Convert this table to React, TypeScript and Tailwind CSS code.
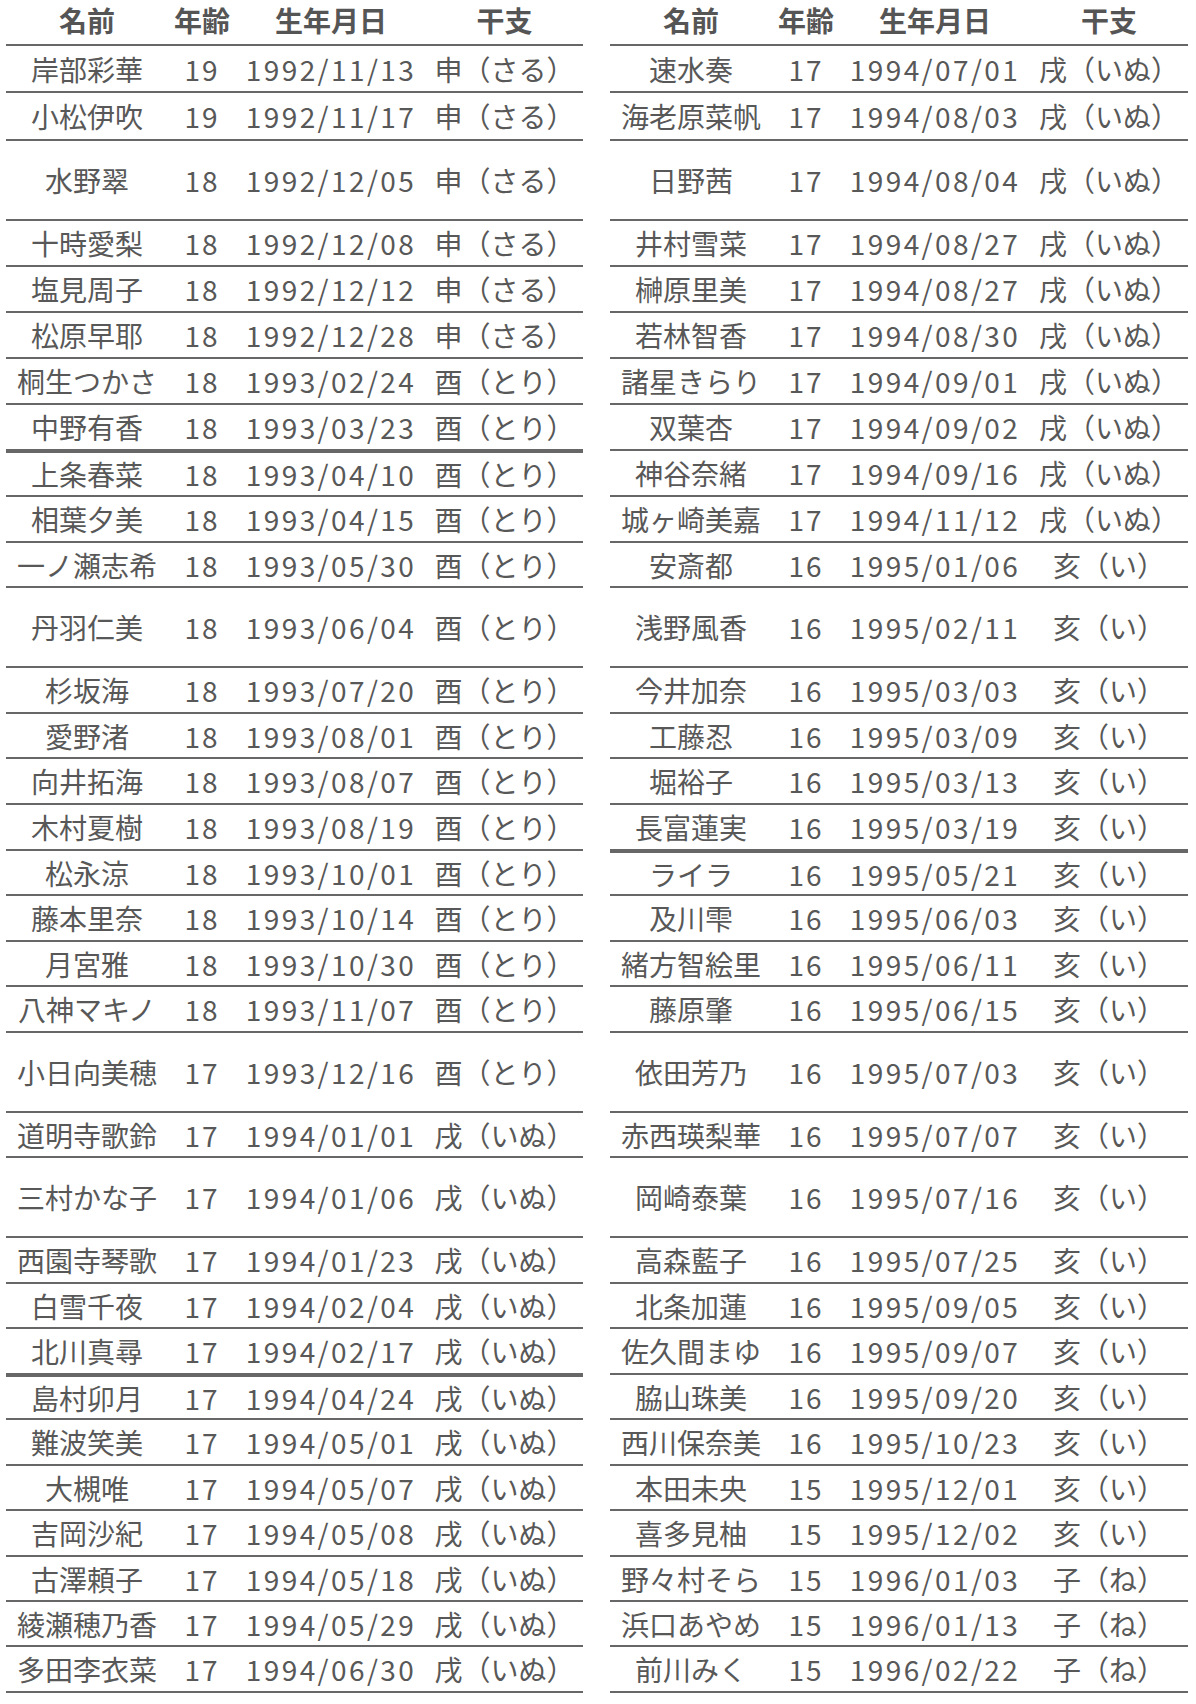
import React from 'react';

type Row = { name: string; age: string; date: string; eto: string };

// shared row heights (px, border included); both halves use the same rows
const heights = [
  'h-[47px]', 'h-[48px]', 'h-[80px]', 'h-[46px]', 'h-[46px]', 'h-[46px]', 'h-[46px]', 'h-[46px]',
  'h-[46px]', 'h-[46px]', 'h-[45px]', 'h-[80px]', 'h-[46px]', 'h-[45px]', 'h-[46px]', 'h-[46px]',
  'h-[45px]', 'h-[46px]', 'h-[45px]', 'h-[46px]', 'h-[80px]', 'h-[45px]', 'h-[80px]', 'h-[46px]',
  'h-[45px]', 'h-[46px]', 'h-[45px]', 'h-[46px]', 'h-[45px]', 'h-[46px]', 'h-[45px]', 'h-[45px]',
  'h-[46px]',
];

const leftRows: Row[] = [
  { name: '岸部彩華', age: '19', date: '1992/11/13', eto: '申（さる）' },
  { name: '小松伊吹', age: '19', date: '1992/11/17', eto: '申（さる）' },
  { name: '水野翠', age: '18', date: '1992/12/05', eto: '申（さる）' },
  { name: '十時愛梨', age: '18', date: '1992/12/08', eto: '申（さる）' },
  { name: '塩見周子', age: '18', date: '1992/12/12', eto: '申（さる）' },
  { name: '松原早耶', age: '18', date: '1992/12/28', eto: '申（さる）' },
  { name: '桐生つかさ', age: '18', date: '1993/02/24', eto: '酉（とり）' },
  { name: '中野有香', age: '18', date: '1993/03/23', eto: '酉（とり）' },
  { name: '上条春菜', age: '18', date: '1993/04/10', eto: '酉（とり）' },
  { name: '相葉夕美', age: '18', date: '1993/04/15', eto: '酉（とり）' },
  { name: '一ノ瀬志希', age: '18', date: '1993/05/30', eto: '酉（とり）' },
  { name: '丹羽仁美', age: '18', date: '1993/06/04', eto: '酉（とり）' },
  { name: '杉坂海', age: '18', date: '1993/07/20', eto: '酉（とり）' },
  { name: '愛野渚', age: '18', date: '1993/08/01', eto: '酉（とり）' },
  { name: '向井拓海', age: '18', date: '1993/08/07', eto: '酉（とり）' },
  { name: '木村夏樹', age: '18', date: '1993/08/19', eto: '酉（とり）' },
  { name: '松永涼', age: '18', date: '1993/10/01', eto: '酉（とり）' },
  { name: '藤本里奈', age: '18', date: '1993/10/14', eto: '酉（とり）' },
  { name: '月宮雅', age: '18', date: '1993/10/30', eto: '酉（とり）' },
  { name: '八神マキノ', age: '18', date: '1993/11/07', eto: '酉（とり）' },
  { name: '小日向美穂', age: '17', date: '1993/12/16', eto: '酉（とり）' },
  { name: '道明寺歌鈴', age: '17', date: '1994/01/01', eto: '戌（いぬ）' },
  { name: '三村かな子', age: '17', date: '1994/01/06', eto: '戌（いぬ）' },
  { name: '西園寺琴歌', age: '17', date: '1994/01/23', eto: '戌（いぬ）' },
  { name: '白雪千夜', age: '17', date: '1994/02/04', eto: '戌（いぬ）' },
  { name: '北川真尋', age: '17', date: '1994/02/17', eto: '戌（いぬ）' },
  { name: '島村卯月', age: '17', date: '1994/04/24', eto: '戌（いぬ）' },
  { name: '難波笑美', age: '17', date: '1994/05/01', eto: '戌（いぬ）' },
  { name: '大槻唯', age: '17', date: '1994/05/07', eto: '戌（いぬ）' },
  { name: '吉岡沙紀', age: '17', date: '1994/05/08', eto: '戌（いぬ）' },
  { name: '古澤頼子', age: '17', date: '1994/05/18', eto: '戌（いぬ）' },
  { name: '綾瀬穂乃香', age: '17', date: '1994/05/29', eto: '戌（いぬ）' },
  { name: '多田李衣菜', age: '17', date: '1994/06/30', eto: '戌（いぬ）' },
];

const rightRows: Row[] = [
  { name: '速水奏', age: '17', date: '1994/07/01', eto: '戌（いぬ）' },
  { name: '海老原菜帆', age: '17', date: '1994/08/03', eto: '戌（いぬ）' },
  { name: '日野茜', age: '17', date: '1994/08/04', eto: '戌（いぬ）' },
  { name: '井村雪菜', age: '17', date: '1994/08/27', eto: '戌（いぬ）' },
  { name: '榊原里美', age: '17', date: '1994/08/27', eto: '戌（いぬ）' },
  { name: '若林智香', age: '17', date: '1994/08/30', eto: '戌（いぬ）' },
  { name: '諸星きらり', age: '17', date: '1994/09/01', eto: '戌（いぬ）' },
  { name: '双葉杏', age: '17', date: '1994/09/02', eto: '戌（いぬ）' },
  { name: '神谷奈緒', age: '17', date: '1994/09/16', eto: '戌（いぬ）' },
  { name: '城ヶ崎美嘉', age: '17', date: '1994/11/12', eto: '戌（いぬ）' },
  { name: '安斎都', age: '16', date: '1995/01/06', eto: '亥（い）' },
  { name: '浅野風香', age: '16', date: '1995/02/11', eto: '亥（い）' },
  { name: '今井加奈', age: '16', date: '1995/03/03', eto: '亥（い）' },
  { name: '工藤忍', age: '16', date: '1995/03/09', eto: '亥（い）' },
  { name: '堀裕子', age: '16', date: '1995/03/13', eto: '亥（い）' },
  { name: '長富蓮実', age: '16', date: '1995/03/19', eto: '亥（い）' },
  { name: 'ライラ', age: '16', date: '1995/05/21', eto: '亥（い）' },
  { name: '及川雫', age: '16', date: '1995/06/03', eto: '亥（い）' },
  { name: '緒方智絵里', age: '16', date: '1995/06/11', eto: '亥（い）' },
  { name: '藤原肇', age: '16', date: '1995/06/15', eto: '亥（い）' },
  { name: '依田芳乃', age: '16', date: '1995/07/03', eto: '亥（い）' },
  { name: '赤西瑛梨華', age: '16', date: '1995/07/07', eto: '亥（い）' },
  { name: '岡崎泰葉', age: '16', date: '1995/07/16', eto: '亥（い）' },
  { name: '高森藍子', age: '16', date: '1995/07/25', eto: '亥（い）' },
  { name: '北条加蓮', age: '16', date: '1995/09/05', eto: '亥（い）' },
  { name: '佐久間まゆ', age: '16', date: '1995/09/07', eto: '亥（い）' },
  { name: '脇山珠美', age: '16', date: '1995/09/20', eto: '亥（い）' },
  { name: '西川保奈美', age: '16', date: '1995/10/23', eto: '亥（い）' },
  { name: '本田未央', age: '15', date: '1995/12/01', eto: '亥（い）' },
  { name: '喜多見柚', age: '15', date: '1995/12/02', eto: '亥（い）' },
  { name: '野々村そら', age: '15', date: '1996/01/03', eto: '子（ね）' },
  { name: '浜口あやめ', age: '15', date: '1996/01/13', eto: '子（ね）' },
  { name: '前川みく', age: '15', date: '1996/02/22', eto: '子（ね）' },
];

const Cells: React.FC<{ a: string; b: string; c: string; d: string; head?: boolean }> = ({ a, b, c, d, head }) => (
  <>
    <div className="w-[162px] text-center whitespace-nowrap">{a}</div>
    <div className={`w-[68px] text-center ${head ? '' : 'tracking-[2px]'}`}>{b}</div>
    <div className={`w-[190px] text-center whitespace-nowrap ${head ? '' : 'tracking-[2.4px]'}`}>{c}</div>
    <div className="flex-1 text-center whitespace-nowrap">{d}</div>
  </>
);

// thick: indexes of rows followed by the heavy separator
const Half: React.FC<{ rows: Row[]; thick: number[]; width: string }> = ({ rows, thick, width }) => (
  <div className={`${width} flex flex-col`}>
    <div className="h-[46px] flex items-center border-b-2 border-[#676767] font-bold text-[#555] pb-[4px]">
      <Cells a="名前" b="年齢" c="生年月日" d="干支" head />
    </div>
    {rows.map((r, i) => (
      <div
        key={r.name}
        className={`${heights[i]} flex items-center border-b-2 border-[#676767] ${thick.includes(i - 1) ? 'border-t-2' : ''}`}
      >
        <Cells a={r.name} b={r.age} c={r.date} d={r.eto} />
      </div>
    ))}
  </div>
);

const App: React.FC = () => {
  return (
    <div className="w-[1196px] min-h-[1704px] bg-white pl-[6px] text-[28px] leading-none text-[#585858] font-['Noto_Sans_CJK_JP','Noto_Sans',sans-serif]">
      <div className="flex gap-[27px]">
        <Half rows={leftRows} thick={[7, 25]} width="w-[577px]" />
        <Half rows={rightRows} thick={[15]} width="w-[578px]" />
      </div>
    </div>
  );
};

export default App;
